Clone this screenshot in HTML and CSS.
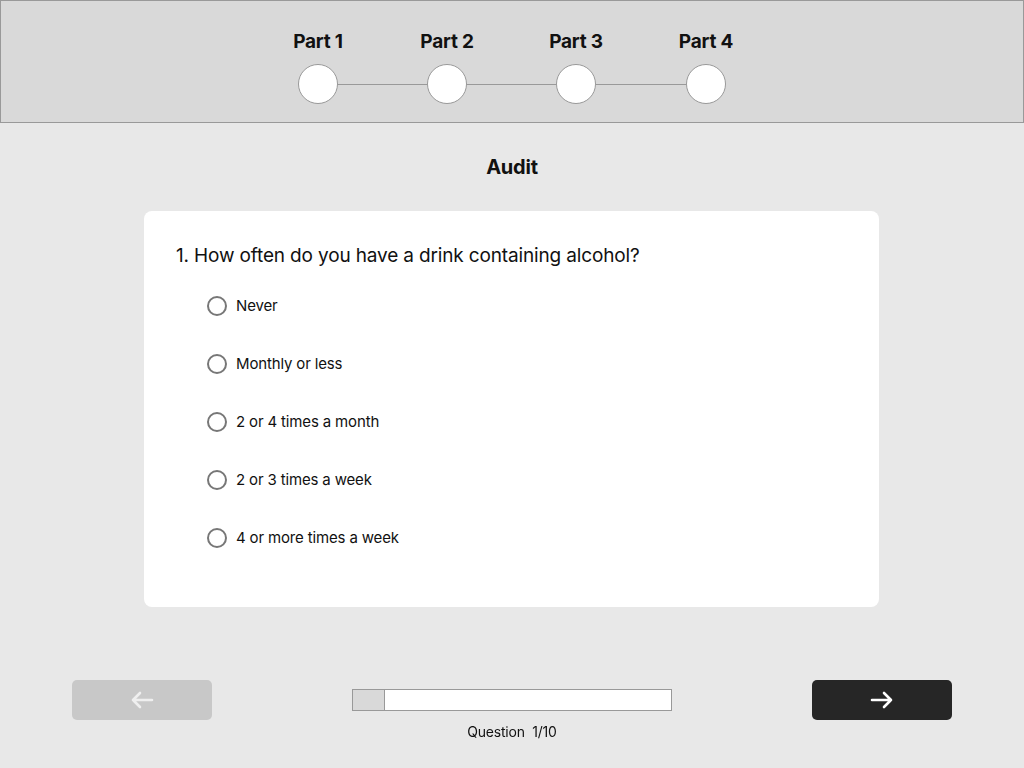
FILE: index.html
```html
<!DOCTYPE html>
<html>
  <head>
    <title>Audit</title>
    <meta name="viewport" content="width=device-width, initial-scale=1">
    <link rel="stylesheet" href="styles.css">
  </head>
  <body>
  <div class="top-container">
    <div class="steps">
      <div class="step"><span class="step-label">Part 1</span><span class="dot"></span></div>
      <div class="step"><span class="step-label">Part 2</span><span class="dot"></span></div>
      <div class="step"><span class="step-label">Part 3</span><span class="dot"></span></div>
      <div class="step"><span class="step-label">Part 4</span><span class="dot"></span></div>
    </div>
  </div>
  <div class="content">
    <h2 class="title">Audit</h2>
    <div class="card">
      <p class="question">1. How often do you have a drink containing alcohol?</p>
      <ul class="options">
        <li class="option"><span class="radio"></span>Never</li>
        <li class="option"><span class="radio"></span>Monthly or less</li>
        <li class="option"><span class="radio"></span>2 or 4 times a month</li>
        <li class="option"><span class="radio"></span>2 or 3 times a week</li>
        <li class="option"><span class="radio"></span>4 or more times a week</li>
      </ul>
    </div>
  </div>
  <div class="foot">
    <button class="btn btn-prev">
      <svg width="26" height="20" viewBox="0 0 26 20"><path d="M23 10H4M11 3L4 10L11 17" fill="none" stroke="#efefef" stroke-width="2.6" stroke-linecap="round" stroke-linejoin="round"/></svg>
    </button>
    <div class="progress">
      <div class="bar"><div class="fill" style="width: 10%"></div></div>
      <div class="count">Question&nbsp;&nbsp;1/10</div>
    </div>
    <button class="btn btn-next">
      <svg width="26" height="20" viewBox="0 0 26 20"><path d="M3 10H22M15 3L22 10L15 17" fill="none" stroke="#ffffff" stroke-width="2.6" stroke-linecap="round" stroke-linejoin="round"/></svg>
    </button>
  </div>
  </body>
</html>
```

FILE: styles.css
```css
* {
  font-family: Inter, "Noto Sans", sans-serif;
  color: #111;
  padding: 0px;
  margin: 0px;
  box-sizing: border-box;
}
html, body {
  background-color: #e8e8e8;
  height: 100%;
}
.top-container {
  height: 123px;
  background-color: #d9d9d9;
  border: 1px solid #999;
  padding-top: 29px;
}
.steps {
  display: flex;
  justify-content: center;
  gap: 89px;
  position: relative;
}
.step {
  width: 40px;
  display: flex;
  flex-direction: column;
  align-items: center;
  position: relative;
}
.step:last-child {
  margin-left: 1px;
}
.step + .step::before {
  content: "";
  position: absolute;
  right: 40px;
  top: 54px;
  width: 90px;
  border-top: 1px solid #999;
}
.step-label {
  font-size: 19px;
  font-weight: 700;
  white-space: nowrap;
  line-height: 24px;
  letter-spacing: -0.2px;
}
.dot {
  margin-top: 10px;
  width: 40px;
  height: 40px;
  border-radius: 50%;
  background: white;
  border: 1px solid #999;
}
.content {
  display: flex;
  flex-direction: column;
  align-items: center;
}
.title {
  font-size: 20px;
  font-weight: 700;
  margin-top: 32px;
  line-height: 24px;
  letter-spacing: -0.2px;
}
.card {
  margin-top: 32px;
  margin-right: 1px;
  width: 735px;
  height: 396px;
  background: white;
  border-radius: 8px;
  padding: 33px 32px;
}
.question {
  font-size: 19px;
  line-height: 24px;
  letter-spacing: -0.15px;
}
.options {
  list-style: none;
  margin-top: 24px;
  padding-left: 31px;
}
.option {
  display: flex;
  align-items: center;
  height: 26px;
  margin-bottom: 32px;
  font-size: 15px;
  letter-spacing: -0.15px;
}
.radio {
  width: 20px;
  height: 20px;
  border-radius: 50%;
  border: 2px solid #777;
  margin-right: 9px;
  margin-top: 2px;
}
.foot {
  position: fixed;
  left: 0;
  right: 0;
  top: 680px;
  display: flex;
  justify-content: space-between;
  padding: 0 72px;
}
.btn {
  width: 140px;
  height: 40px;
  border: none;
  border-radius: 5px;
  display: flex;
  align-items: center;
  justify-content: center;
}
.btn-prev {
  background: #c8c8c8;
}
.btn-next {
  background: #262626;
}
.progress {
  display: flex;
  flex-direction: column;
  align-items: center;
  padding-top: 9px;
}
.bar {
  width: 320px;
  height: 22px;
  background: white;
  border: 1px solid #999;
}
.fill {
  height: 100%;
  background: #d9d9d9;
  border-right: 1px solid #999;
}
.count {
  margin-top: 12px;
  font-size: 14px;
  letter-spacing: -0.2px;
}
```
